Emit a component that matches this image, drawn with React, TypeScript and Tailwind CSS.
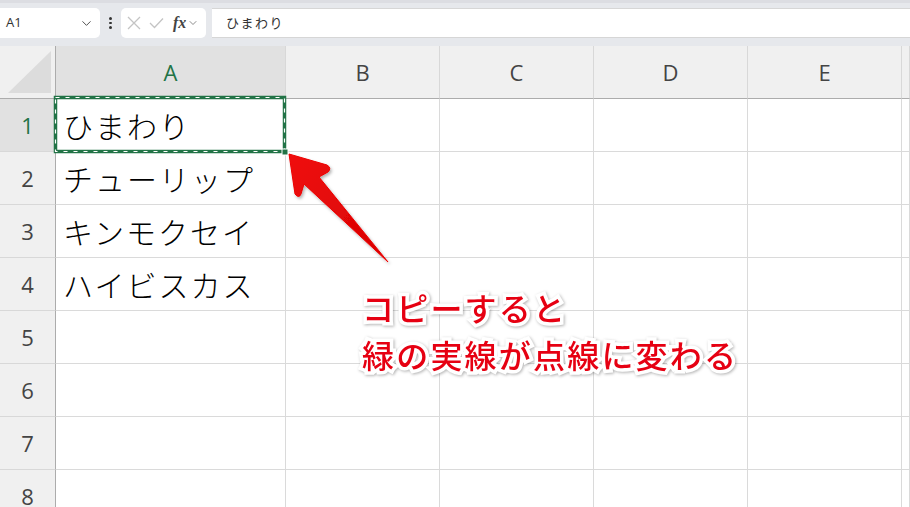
import { ChevronDown } from 'lucide-react'

const COLS = ['A', 'B', 'C', 'D', 'E', '']
const ROWS = ['ひまわり', 'チューリップ', 'キンモクセイ', 'ハイビスカス', '', '', '', '']

const ui = '[font-family:"Open_Sans","Noto_Sans",sans-serif]'
const jp = '[font-family:"Noto_Sans_CJK_JP",sans-serif]'

function TopBar() {
  return (
    <div className="relative flex h-[46px] items-start bg-[#e6e8ec] pt-[8px]">
      <div className="absolute left-0 right-0 top-0 h-[3px] bg-[#dcdde2]" />
      <div className="flex h-[30px] w-[100px] items-center justify-between rounded-r-[5px] bg-white pl-[6px] pr-[6px]">
        <span className={`${ui} text-[13px] text-[#333]`}>A1</span>
        <ChevronDown size={15} strokeWidth={1.5} className="text-[#444]" />
      </div>
      <div className="flex h-[30px] w-[21px] flex-col items-center justify-center gap-[2px]">
        <span className="h-[2.5px] w-[2.5px] rounded-full bg-[#333]" />
        <span className="h-[2.5px] w-[2.5px] rounded-full bg-[#333]" />
        <span className="h-[2.5px] w-[2.5px] rounded-full bg-[#333]" />
      </div>
      <div className="flex h-[30px] w-[85px] items-center rounded-[5px] bg-white pl-[6px]">
        <svg width="14" height="14" viewBox="0 0 14 14" className="mr-[8px]">
          <path d="M1 1 L13 13 M13 1 L1 13" stroke="#c4c4c4" strokeWidth="1.3" fill="none" />
        </svg>
        <svg width="15" height="12" viewBox="0 0 15 12" className="mr-[9px]">
          <path d="M1 6 L5.5 10.5 L14 1.5" stroke="#c4c4c4" strokeWidth="1.3" fill="none" />
        </svg>
        <span className="[font-family:'Liberation_Serif',serif] text-[16px] font-bold italic leading-none text-[#444]">
          fx
        </span>
        <ChevronDown size={12} strokeWidth={1.5} className="ml-[1px] text-[#666]" />
      </div>
      <div className="ml-[6px] flex h-[30px] flex-1 items-center border-y border-[#d6d6d6] bg-white pl-[14px]">
        <span className={`${jp} text-[13px] tracking-[1.5px] text-[#333]`}>ひまわり</span>
      </div>
    </div>
  )
}

function Grid() {
  return (
    <div className="grid grid-cols-[56px_230px_154px_154px_154px_154px_1fr]">
      <div className="relative h-[53px] border-b border-r border-[#acacac] bg-[#f0f0f0]">
        <svg width="56" height="52" className="absolute left-0 top-0">
          <polygon points="8,47 51,47 51,5" fill="#dcdcdc" />
        </svg>
      </div>
      {COLS.map((c, i) => (
        <div
          key={c + i}
          className={`flex h-[53px] items-center justify-center border-b border-r border-b-[#acacac] border-r-[#d8d8d8] ${ui} text-[22px] ${
            i === 0 ? 'bg-[#e1e1e1] text-[#217346]' : 'bg-[#f0f0f0] text-[#444]'
          }`}
        >
          {c}
        </div>
      ))}
      {ROWS.map((text, r) => (
        <Row key={r} n={r + 1} text={text} />
      ))}
    </div>
  )
}

function Row({ n, text }: { n: number; text: string }) {
  return (
    <>
      <div
        className={`flex h-[53px] items-center justify-center border-b border-r border-b-[#d8d8d8] border-r-[#acacac] ${ui} text-[22px] ${
          n === 1 ? 'bg-[#e1e1e1] text-[#217346]' : 'bg-[#f0f0f0] text-[#444]'
        }`}
      >
        {n}
      </div>
      <div
        className={`flex h-[53px] items-center border-b border-r border-[#dadada] pl-[7px] ${jp} text-[30px] font-light tracking-[2px] text-black`}
      >
        {text}
      </div>
      {[0, 1, 2, 3, 4].map((k) => (
        <div key={k} className="h-[53px] border-b border-r border-[#dadada] bg-white" />
      ))}
    </>
  )
}

export default function App() {
  return (
    <div className="relative h-[507px] w-[910px] overflow-hidden bg-white">
      <TopBar />
      <Grid />

      {/* marching-ants selection around A1 */}
      <svg className="absolute left-0 top-0" width="910" height="507">
        <rect x="55.5" y="97.5" width="229" height="54" fill="none" stroke="#217346" strokeWidth="3.5" />
        <rect x="55.5" y="97.5" width="229" height="54" fill="none" stroke="#fff" strokeWidth="1.2" strokeDasharray="4 6" />
        <rect x="282" y="149" width="6" height="6" fill="#217346" stroke="#fff" strokeWidth="1" />
        <defs>
          <linearGradient id="arrowFill" x1="0" y1="0" x2="1" y2="1">
            <stop offset="0" stopColor="#f01010" />
            <stop offset="1" stopColor="#d60000" />
          </linearGradient>
          <filter id="arrowShadow" x="-20%" y="-20%" width="140%" height="140%">
            <feDropShadow dx="1.5" dy="2" stdDeviation="1.5" floodColor="#000" floodOpacity="0.3" />
          </filter>
        </defs>
        <path
          d="M289 154 L327 165 Q332 168 328 172 L319 177 L388 262 L304 184 L301 194 Q299 199 295 194 Z"
          fill="url(#arrowFill)"
          stroke="#e00"
          strokeWidth="1"
          strokeLinejoin="round"
          filter="url(#arrowShadow)"
        />
      </svg>

      <div
        className={`absolute left-[362px] top-[284px] ${jp} text-[32px] font-medium leading-[47px] tracking-[2.2px] text-[#e60012] [paint-order:stroke_fill] [-webkit-text-stroke:7px_white] [filter:drop-shadow(1px_1.5px_1.5px_rgba(0,0,0,0.3))]`}
      >
        <div>コピーすると</div>
        <div>緑の実線が点線に変わる</div>
      </div>
    </div>
  )
}
